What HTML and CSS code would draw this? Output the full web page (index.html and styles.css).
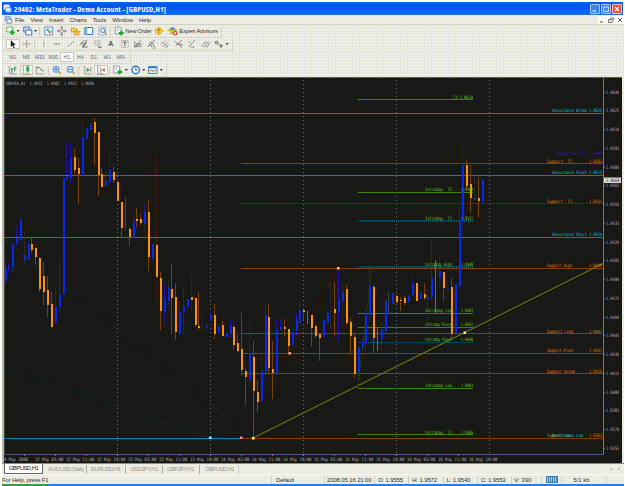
FILE: index.html
```html
<!DOCTYPE html>
<html lang="en">
<head>
<meta charset="utf-8">
<title>29402: MetaTrader - Demo Account - [GBPUSD,H1]</title>
<link rel="stylesheet" href="styles.css">
</head>
<body>
<svg class="defs" width="0" height="0">
  <symbol id="i-newchart" viewBox="0 0 10 10"><path d="M1 1h6v5H1z" fill="#fff" stroke="#4a9a4a" stroke-width=".8"/><path d="M6.5 4v5M4 6.5h5" stroke="#1faa2c" stroke-width="2"/></symbol>
  <symbol id="i-profiles" viewBox="0 0 10 10"><path d="M1 1h6v5H1z" fill="#cfe2f8" stroke="#3c76c8"/><path d="M3 4h6v5H3z" fill="#f4f8ff" stroke="#3c76c8"/></symbol>
  <symbol id="i-market" viewBox="0 0 10 10"><path d="M1 1h8v8H1z" fill="#eef6ff" stroke="#5b95cf"/><path d="M2.500 4.500l1.500-2 1.500 2z" fill="#28a745" stroke="#28a745" stroke-width=".5"/><path d="M4.500 5.500l1.500 2 1.500-2z" fill="#e04418" stroke="#e04418" stroke-width=".5"/></symbol>
  <symbol id="i-nav" viewBox="0 0 10 10"><path d="M5 .5v9M.5 5h9M3.7 2L5 .7 6.300 2M3.700 8L5 9.300 6.300 8M2 3.700L.7 5 2 6.300M8 3.700L9.300 5 8 6.300" fill="none" stroke="#777" stroke-width=".9"/><circle cx="5" cy="5" r="1.700" fill="#f2f2ea" stroke="#777" stroke-width=".7"/></symbol>
  <symbol id="i-folders" viewBox="0 0 10 10"><path d="M.5 2h3l1 1h2v3h-6z" fill="#ffd24a" stroke="#c28a12" stroke-width=".7"/><path d="M6 3.500l1 2h2.500l-2 1.500.8 2.500L6 8 3.700 9.500 4.500 7l-2-1.500H5z" fill="#ffc020" stroke="#b87c10" stroke-width=".5"/></symbol>
  <symbol id="i-terminal" viewBox="0 0 10 10"><path d="M1 1.500h8v7H1z" fill="#fff" stroke="#3478c4"/><path d="M1 1.500h2.500v7H1z" fill="#79b0e8"/></symbol>
  <symbol id="i-tester" viewBox="0 0 10 10"><path d="M1 1h7v8H1z" fill="#e2edf7" stroke="#8ba9c4" stroke-width=".8"/><circle cx="5" cy="4.500" r="2" fill="#fff" stroke="#5580aa"/><path d="M6.500 6L9 8.700" stroke="#927034"/></symbol>
  <symbol id="i-order" viewBox="0 0 10 10"><path d="M1 1h5l1 1v6H1z" fill="#fff" stroke="#6f8498" stroke-width=".8"/><path d="M2.500 3h3M2.500 4.500h2" stroke="#8b8b8b" stroke-width=".6"/><path d="M7 4.500v5M4.500 7h5" stroke="#18a826" stroke-width="1.800"/></symbol>
  <symbol id="i-meta" viewBox="0 0 10 10"><path d="M5 .8L9.200 5 5 9.200.8 5z" fill="#ffd64d" stroke="#c7961c" stroke-width=".9"/><path d="M5 2.800v4.400M3.500 4.500L5 3l1.500 1.500" stroke="#8a5e08" fill="none" stroke-width=".8"/></symbol>
  <symbol id="i-expert" viewBox="0 0 10 10"><path d="M1 4q4-6 7 0z" fill="#4d94dd"/><path d="M0 4.500h9" stroke="#e4b020" stroke-width="1.300"/><circle cx="4" cy="6.500" r="2" fill="#e2b06c"/><circle cx="7.500" cy="7.300" r="2.300" fill="#e5361c"/><path d="M6.500 6.300h2v2h-2z" fill="#fff"/></symbol>
  <symbol id="i-cursor" viewBox="0 0 10 10"><path d="M3 1v7l1.700-1.500L6 9.200l1-.5L5.800 6H8z" fill="#222"/></symbol>
  <symbol id="i-cross" viewBox="0 0 10 10"><path d="M5 1v8M1 5h8" stroke="#8a8a84" stroke-width=".8"/></symbol>
  <symbol id="i-v" viewBox="0 0 10 10"><path d="M5 1.500v7" stroke="#999" stroke-width=".8"/></symbol>
  <symbol id="i-h" viewBox="0 0 10 10"><path d="M2 5h6" stroke="#777" stroke-width=".8"/></symbol>
  <symbol id="i-t" viewBox="0 0 10 10"><path d="M2 8l6-6" stroke="#777" stroke-width=".8"/></symbol>
  <symbol id="i-chan" viewBox="0 0 10 10"><path d="M1 6l5-5M3 8l5-5M2 4l5 2M5 8h4M8 1L4 9" stroke="#555" stroke-width=".8"/></symbol>
  <symbol id="i-fibo" viewBox="0 0 10 10"><path d="M1 2h7M1 4h7M2 6h7" stroke="#888" stroke-width=".8" stroke-dasharray="1 .5"/><path d="M6 6.500v2h3" stroke="#555" fill="none" stroke-width=".8"/></symbol>
  <symbol id="i-label" viewBox="0 0 10 10"><path d="M1.500 1.500h7v7h-7z" stroke="#777" fill="none" stroke-width=".7" stroke-dasharray="1 1"/><path d="M3 3h4M5 3v4.500" stroke="#555" stroke-width=".9"/></symbol>
  <symbol id="i-fan" viewBox="0 0 10 10"><path d="M2 8l6-7M2 8l7-4M2 8l7-1M2 2v6M3 5h5" stroke="#666" stroke-width=".7"/></symbol>
  <symbol id="i-arc" viewBox="0 0 10 10"><path d="M1 8l7-7M3 3q4 0 4 5M2 5q3 0 3 3M6 9h3" stroke="#666" fill="none" stroke-width=".8"/></symbol>
  <symbol id="i-fork" viewBox="0 0 10 10"><path d="M1 6l5-5M3 8l6-6M2 3l6 5M6 9l3-4" stroke="#777" stroke-width=".8" stroke-dasharray="1.500 .5"/></symbol>
  <symbol id="i-gann" viewBox="0 0 10 10"><path d="M1 2l3 3 4-4M2 6l3-1 3 4M5 5l4 1" stroke="#666" fill="none" stroke-width=".8"/></symbol>
  <symbol id="i-line2" viewBox="0 0 10 10"><path d="M2 8l6-7M4 8h4M2 3h2" stroke="#777" stroke-width=".8"/></symbol>
  <symbol id="i-par" viewBox="0 0 10 10"><path d="M1 8l4-6M3.500 8.500l4-6M6 8.500l3-5" stroke="#777" stroke-width=".8"/></symbol>
  <symbol id="i-arrows" viewBox="0 0 10 10"><path d="M1 3.500l2-1.500 1.500 2-1.500 1zM5 6h3v2H6" stroke="#444" fill="none" stroke-width=".9"/></symbol>
  <symbol id="i-bars" viewBox="0 0 10 10"><path d="M1.500 1v8H9" stroke="#888" fill="none" stroke-width=".8"/><path d="M4 3v5M4 4h1.500M7 1.500v5M7 3h1.500" stroke="#258a38"/></symbol>
  <symbol id="i-candle" viewBox="0 0 10 10"><path d="M1.500 1v8H9" stroke="#888" fill="none" stroke-width=".8"/><path d="M6 0v8" stroke="#258a38" stroke-width=".7"/><path d="M4.500 1.500h3v5h-3z" fill="#25b53c"/></symbol>
  <symbol id="i-linec" viewBox="0 0 10 10"><path d="M1.500 1v8H9" stroke="#888" fill="none" stroke-width=".8"/><path d="M2 3q2-2 4 1t3 2" stroke="#258a38" fill="none"/></symbol>
  <symbol id="i-zin" viewBox="0 0 10 10"><path d="M6.500 6.500L9 9" stroke="#d19b28" stroke-width="1.700"/><circle cx="4.300" cy="4.300" r="3" fill="#d9ecff" stroke="#3b82d0"/><path d="M2.700 4.300h3.200M4.300 2.700v3.200" stroke="#2266bb" stroke-width=".9"/></symbol>
  <symbol id="i-zout" viewBox="0 0 10 10"><path d="M6.500 6.500L9 9" stroke="#d19b28" stroke-width="1.700"/><circle cx="4.300" cy="4.300" r="3" fill="#d9ecff" stroke="#3b82d0"/><path d="M2.700 4.300h3.200" stroke="#2266bb" stroke-width=".9"/></symbol>
  <symbol id="i-scroll" viewBox="0 0 10 10"><path d="M2 1v8h7" stroke="#888" fill="none" stroke-width=".8"/><path d="M4 3v4l3-2z" fill="#24a03a"/><path d="M8 2v5" stroke="#777" stroke-width=".7"/></symbol>
  <symbol id="i-shift" viewBox="0 0 10 10"><path d="M2 1v8h7M5 2v6" stroke="#777" fill="none" stroke-width=".8"/><path d="M9 3v4L6 5z" fill="#d05828"/></symbol>
  <symbol id="i-clock" viewBox="0 0 10 10"><circle cx="5" cy="5" r="3.700" fill="#fff" stroke="#2673ce" stroke-width="1.400"/><path d="M5 2.700V5h1.800" fill="none" stroke="#333" stroke-width=".8"/></symbol>
  <symbol id="i-tpl" viewBox="0 0 10 10"><path d="M.8 1.500h8.400v7H.8z" fill="#e3f0ff" stroke="#4b86c6"/><path d="M1 2.500h8" stroke="#3c78c0" stroke-width="1.500"/><path d="M2 6l2-1 1 1.500L8 5" stroke="#c04a2a" fill="none" stroke-width=".8"/></symbol>
  <symbol id="i-app" viewBox="0 0 10 10"><path d="M1 1h6v5H1z" fill="#fff" stroke="#b9d4ff"/><path d="M3 4h6v5H3z" fill="#d9e9ff" stroke="#5c98e8"/></symbol>
</svg>

<div class="window">
  <header class="titlebar">
    <svg class="icon"><use href="#i-app"/></svg>
    <h1>29402: MetaTrader - Demo Account - [GBPUSD,H1]</h1>
    <div class="winbtns">
      <svg viewBox="0 0 10 10"><path d="M2 7.500h4" stroke="#fff" stroke-width="1.500"/></svg>
      <svg viewBox="0 0 10 10"><path d="M2 2.500h6v5.500H2z" fill="none" stroke="#fff"/></svg>
      <svg class="close" viewBox="0 0 10 10"><path d="M2.500 2.500l5 5M7.500 2.500l-5 5" stroke="#fff" stroke-width="1.400"/></svg>
    </div>
  </header>

  <nav class="menubar">
    <svg class="icon"><use href="#i-profiles"/></svg>
    <span>File</span><span>View</span><span>Insert</span><span>Charts</span><span>Tools</span><span>Window</span><span>Help</span>
    <div class="mdibtns">
      <svg viewBox="0 0 6 6"><path d="M1 5h3" stroke="#555"/></svg>
      <svg viewBox="0 0 6 6"><path d="M2 1h3.500v2.500M.5 2.500h3.500v3H.5z" fill="none" stroke="#555" stroke-width=".8"/></svg>
      <svg viewBox="0 0 6 6"><path d="M1 1l4 4M5 1L1 5" stroke="#555"/></svg>
    </div>
  </nav>

  <div class="toolbars">
    <div class="bar main">
      <svg class="cell slim"><use href="#i-newchart"/></svg><i class="drop"></i>
      <svg class="cell"><use href="#i-profiles"/></svg><i class="drop"></i><i class="sep"></i>
      <svg class="cell"><use href="#i-market"/></svg><svg class="cell"><use href="#i-nav"/></svg><svg class="cell"><use href="#i-folders"/></svg><svg class="cell"><use href="#i-terminal"/></svg><svg class="cell"><use href="#i-tester"/></svg><i class="sep"></i>
      <svg class="cell order-icon"><use href="#i-order"/></svg><span class="order">New Order</span>
      <svg class="cell"><use href="#i-meta"/></svg>
      <svg class="cell"><use href="#i-expert"/></svg><span class="expert">Expert Advisors</span>
    </div>
    <div class="bar">
      <svg class="cell on"><use href="#i-cursor"/></svg><svg class="cell"><use href="#i-cross"/></svg><i class="sep"></i>
      <svg class="cell"><use href="#i-v"/></svg><svg class="cell"><use href="#i-h"/></svg><svg class="cell"><use href="#i-t"/></svg><svg class="cell"><use href="#i-chan"/></svg><svg class="cell"><use href="#i-fibo"/></svg><b class="cell">A</b><svg class="cell"><use href="#i-label"/></svg><svg class="cell"><use href="#i-fan"/></svg><svg class="cell"><use href="#i-arc"/></svg><svg class="cell"><use href="#i-fork"/></svg><svg class="cell"><use href="#i-gann"/></svg><svg class="cell"><use href="#i-line2"/></svg><svg class="cell"><use href="#i-par"/></svg><svg class="cell"><use href="#i-arrows"/></svg><i class="drop"></i>
    </div>
    <div class="bar periods">
      <span class="cell">M1</span><span class="cell">M5</span><span class="cell">M15</span><span class="cell">M30</span><span class="cell on">H1</span><span class="cell">H4</span><span class="cell">D1</span><span class="cell">W1</span><span class="cell">MN</span>
    </div>
    <div class="bar">
      <svg class="cell"><use href="#i-bars"/></svg><svg class="cell on"><use href="#i-candle"/></svg><svg class="cell"><use href="#i-linec"/></svg><i class="sep"></i>
      <svg class="cell"><use href="#i-zin"/></svg><svg class="cell"><use href="#i-zout"/></svg><i class="sep"></i>
      <svg class="cell"><use href="#i-scroll"/></svg><svg class="cell on"><use href="#i-shift"/></svg><i class="sep"></i>
      <svg class="cell"><use href="#i-order"/></svg><i class="drop"></i><svg class="cell"><use href="#i-clock"/></svg><i class="drop"></i><svg class="cell"><use href="#i-tpl"/></svg><i class="drop"></i>
    </div>
  </div>

  <main class="chart">
    <svg id="plot" viewBox="4 77 618 386" width="618" height="386"></svg>
  </main>

  <div class="tabs">
    <span class="active">GBPUSD,H1</span><span class="t2">AUDUSD,Daily</span><span class="t3">EURUSD,H1</span><span class="t4">USDJPY,H1</span><span class="t5">GBPJPY,H1</span><span class="t6">GBPUSD,H1</span>
    <div class="scroll"><i></i><i></i></div>
  </div>

  <footer class="status">
    <span class="help">For Help, press F1</span><span class="profile">Default</span><span class="date">2008.05.16 21:00</span><span class="val">O: 1.9555</span><span class="val">H: 1.9572</span><span class="val">L: 1.9540</span><span class="val">C: 1.9553</span><span class="vol">V: 390</span>
    <span class="conn"><svg viewBox="0 0 12 7" width="12" height="7"><path d="M0 0h12v7H0z" fill="#3d7fae"/><path d="M1.500 1v5M3.500 1v5M5.500 1v5M7.500 1v5" stroke="#b8d94e"/><path d="M9.500 1v5" stroke="#efe08a"/></svg></span>
    <span class="kb">5/1 kb</span>
  </footer>
  <div class="taskbar"><i></i></div>
</div>
<script src="chart.js"></script>
</body>
</html>
```
FILE: styles.css
```css
* { box-sizing: border-box; }

body {
  margin: 0;
  background: #fff;
  font-family: "Liberation Sans", Arial, sans-serif;
  font-size: 6.3px;
  color: #333;
}

.defs { display: block; position: absolute; }

.window {
  width: 625px;
  height: 486px;
  padding: 2px 0 0 2px;
  display: flex;
  flex-direction: column;
  overflow: hidden;
}

.titlebar {
  height: 13px;
  flex: none;
  margin-right: 2px;
  display: flex;
  align-items: center;
  padding-left: 1px;
  background: linear-gradient(#0b66f6 0, #0455e2 20%, #0558e8 50%, #0068ff 70%, #0068ff 90%, #3c6ccc 100%);
  color: #fff;
}

.icon { width: 9px; height: 9px; flex: none; }

.titlebar h1 {
  margin: 0 0 0 2px;
  font-family: "Open Sans", sans-serif;
  font-size: 7.5px;
  font-weight: bold;
  font-stretch: condensed;
  letter-spacing: 0.16px;
  white-space: nowrap;
}

.winbtns { margin-left: auto; display: flex; gap: 1px; padding-right: 1px; }

.winbtns svg {
  width: 10px;
  height: 10px;
  border: 1px solid #a9c8f8;
  border-radius: 1px;
  background: #3c80e8;
}

.winbtns .close { background: #e2572f; border-color: #f3c4b2; }

.menubar {
  height: 10px;
  flex: none;
  margin-right: 1px;
  display: flex;
  align-items: center;
  padding-left: 2px;
  background: #edece3;
  border-bottom: 1px solid #d5d3c2;
  font-size: 6px;
  letter-spacing: -0.1px;
}

.menubar .icon { margin-right: 2px; height: 8px; }
.menubar span { margin-right: 6.1px; }

.mdibtns {
  margin-left: auto;
  display: flex;
  gap: 3px;
  padding: 1px 1px 1px 2px;
  background: #f8f8f4;
}

.mdibtns svg { width: 6px; height: 6px; }

.toolbars {
  height: 52px;
  flex: none;
  margin-right: 1px;
  display: flex;
  flex-direction: column;
  background-color: #e9e8e0;
  background-image: radial-gradient(#fff 0.5px, transparent 0.8px), radial-gradient(#ffffb0 0.4px, transparent 0.7px);
  background-size: 3px 3px, 9px 7px;
}

.bar {
  height: 13.1px;
  align-self: flex-start;
  display: flex;
  align-items: center;
  padding: 0 2px 0 3px;
  border-left: 1px solid #dad8cb;
  border-right: 1px solid #d3d1c3;
  border-bottom: 1px solid #d9d7c9;
}

.main { padding-left: 2px; padding-right: 3px; }

.cell {
  width: 13.5px;
  height: 10px;
  padding: 0 1px;
  flex: none;
  text-align: center;
  line-height: 10px;
}

.slim { width: 11.5px; padding: 0; }
.order-icon { width: 12.5px; padding: 0 1px; }

b.cell { font-size: 7px; color: #555; }

.on { background: #fbfbf9; box-shadow: inset 0 0 0 1px #c9c7bb; }

.drop {
  width: 3px;
  height: 2px;
  flex: none;
  margin-right: 1px;
  background: #333;
  clip-path: polygon(0 0, 100% 0, 50% 100%);
}

.sep { width: 1px; height: 9px; flex: none; margin: 0 1.3px; background: #d0cebf; }
.order { width: 27px; white-space: nowrap; font-size: 5.9px; letter-spacing: -0.25px; }
.expert { width: 39px; white-space: nowrap; font-size: 5.9px; letter-spacing: -0.15px; }
.periods { font-size: 5px; color: #666; }
.periods .cell { padding: 0; }

.chart {
  flex: none;
  height: 386px;
  margin-right: 1px;
  padding-left: 2px;
  background: linear-gradient(90deg, #b7b5a6 0 2px, #edece3 2px);
}

.chart svg { display: block; background: #181816; }

.tabs {
  height: 11px;
  flex: none;
  display: flex;
  align-items: center;
  padding-left: 2px;
  margin-right: 1px;
  background: #edece3;
  border-top: 1px solid #8b8a82;
  color: #999788;
  font-size: 5.9px;
}

.tabs span { white-space: nowrap; letter-spacing: -0.15px; line-height: 9px; }
.tabs .active { width: 39px; text-align: center; background: #fff; color: #222; border: 1px solid #666; border-top: 0; letter-spacing: -0.5px; }
.tabs .t2 { width: 44px; padding-left: 5px; border-right: 1px solid #aaa; letter-spacing: -0.3px; }
.tabs .t3 { width: 39px; padding-left: 4px; border-right: 1px solid #aaa; letter-spacing: -0.5px; }
.tabs .t4 { width: 37px; padding-left: 4px; border-right: 1px solid #aaa; letter-spacing: -0.4px; }
.tabs .t5 { width: 37px; padding-left: 4px; border-right: 1px solid #aaa; letter-spacing: -0.5px; }
.tabs .t6 { width: 39px; padding-left: 5px; border-right: 1px solid #ccc; letter-spacing: -0.55px; }

.scroll { margin-left: auto; display: flex; gap: 6px; padding-right: 4px; }
.scroll i { width: 2px; height: 3px; background: #aaa; clip-path: polygon(0 50%, 100% 0, 100% 100%); }
.scroll i + i { transform: scaleX(-1); }

.status {
  height: 10px;
  flex: none;
  margin-right: 1px;
  display: flex;
  align-items: center;
  background: #edece3;
  border-top: 1px solid #f8f8f4;
  font-size: 6px;
  white-space: nowrap;
}

.status span { border-right: 1px solid #d3d1c3; line-height: 8px; }
.help { width: 270px; letter-spacing: -0.18px; }
.profile { width: 53px; padding-left: 4px; letter-spacing: -0.15px; }
.date { width: 50px; padding-left: 2px; letter-spacing: -0.14px; }
.val { width: 34.300px; padding-left: 3px; letter-spacing: -0.15px; }
.vol { width: 30px; padding-left: 2px; }
.conn { width: 20px; padding-left: 4px; display: flex; }
.kb { width: 45px; padding-left: 11px; }

.taskbar { height: 2px; flex: none; margin-right: 1px; background: #2f7be4; }
.taskbar i { display: block; width: 45px; height: 2px; background: #3e9a3e; }

#plot { font-family: "DejaVu Sans Mono", monospace; font-size: 4.6px; }
#plot text { white-space: pre; }
.axis { fill: #b0b0be; }
.now { fill: #222; }
.line { fill: none; stroke-width: 1; shape-rendering: crispEdges; }
.grid { stroke: #66667c; stroke-dasharray: 1 3; }
.cyan { stroke: #0086a6; }
.orange { stroke: #7f4200; }
.green { stroke: #3d8507; }
.teal { stroke: #17566a; stroke-width: 1.5; stroke-dasharray: 1 1; }
.dashed { stroke: #6d2614; stroke-dasharray: 2 1; }
.frame { stroke: #77777c; }
.base { stroke: #55558a; }
.wb { stroke: #3520c0; stroke-dasharray: 1 1; }
.wo { stroke: #784007; }
.wr { stroke: #642514; stroke-dasharray: 1 1; }
.wy { stroke: #77770c; }
.wg { stroke: #444440; }
.b { fill: #0828ee; shape-rendering: crispEdges; }
.o { fill: #ff9208; shape-rendering: crispEdges; }
.tc { fill: #08cce0; }
.to { fill: #e8780c; }
.tg { fill: #60d41c; }
.tp { fill: #3c24b4; }
```
FILE: chart.js
```js
const plot = document.getElementById("plot");
const NS = "http://www.w3.org/2000/svg";

function add(tag, attrs, text) {
  const el = document.createElementNS(NS, tag);
  for (const k in attrs) el.setAttribute(k, attrs[k]);
  if (text) el.textContent = text;
  plot.appendChild(el);
}
function line(x1, y1, x2, y2, cls) {
  add("line", { x1, y1, x2, y2, class: "line " + cls });
}
function label(x, y, w, text, cls) {
  add("text", { x, y, textLength: w, lengthAdjust: "spacingAndGlyphs", class: cls }, text);
}

// frame and time grid
line(4, 77.5, 622, 77.5, "base");
[117.5, 210.5, 303.5, 396.5, 489.5].forEach(x => line(x, 80, x, 454, "grid"));
line(603.5, 78, 603.5, 455, "frame");
line(4, 454.5, 604, 454.5, "base");
line(4.5, 78, 4.5, 455, "wg");

// horizontal levels
[113.5, 175.5, 237.5].forEach(y => line(4, y, 603, y, "cyan"));
[163.5, 268.5, 333.5, 353.5, 373.5, 438.5].forEach(y => line(241, y, 603, y, "orange"));
line(4, 438.5, 242, 438.5, "cyan");
line(241, 203.5, 603, 203.5, "dashed");
[99.5, 192.5, 313.5, 327.5, 388.5, 434.5].forEach(y => line(358, y, 473, y, "green"));
[221, 267, 342.5].forEach(y => line(358, y, 473, y, "teal"));

// trend lines
add("path", { d: "M4 239L253 438M4 368L210 438", stroke: "#0c5360", "stroke-dasharray": "1 3", fill: "none" });
add("path", { d: "M241 438L338 268", stroke: "#6e0a0a", "stroke-dasharray": "2 2", fill: "none" });
add("path", { d: "M358 388L372 267", stroke: "#2f6d18", "stroke-dasharray": "1 2", fill: "none" });
add("path", { d: "M253 438L603 263.500", stroke: "#85850c", fill: "none" });

// x, high, low, body top, body bottom, type
const candles = [
  [5,262,283,269,281,"b"],[8.5,262,274,267,269,"b"],[12.5,243,272,245,268,"b"],[16.5,228,245,238,242,"b"],
  [20,219,240,219,240,"b"],[24,233,265,255,260,"b"],[28,243,259,243,259,"b"],[31.5,238,253,244,250,"o"],
  [35.5,247,265,248,257,"o"],[39.5,257,292,258,289,"o"],[43.5,262,305,276,292,"o"],[47.5,276,317,290,305,"o"],
  [51.5,291,328,304,327,"o"],[55.5,288,324,306,322,"b"],[59,262,311,294,307,"b"],
  [63,178,294,178,294,"b"],[66.5,140,180,177,180,"b"],[70.5,144,183,158,178,"b"],[74.5,149,176,157,170,"o"],
  [78.5,158,204,168,174,"o"],[82,123,176,137,176,"b"],[86,128,139,128,139,"b"],[90,123,130,123,130,"b"],
  [94,118,165,122,133,"o"],[98,132,196,132,175,"o"],[101.5,168,187,174,187,"o"],[105.5,172,186,181,186,"b"],
  [109.5,155,182,170,182,"b"],[113.5,167,183,172,180,"o"],[117.5,182,201,182,201,"o"],[121,202,238,202,228,"o"],
  [125,197,230,0,0,"g"],[129,227,246,229,237,"o"],[133,217,238,221,238,"b"],[136.5,208,227,219,221,"o"],
  [140.5,214,225,219,223,"o"],[144.5,205,232,211,224,"b"],[148,200,271,212,257,"o"],[152,244,259,244,259,"b"],
  [156,156,301,245,277,"r"],[160,272,330,278,311,"o"],[164,284,323,299,312,"b"],[168,281,308,288,301,"b"],
  [171.5,264,334,289,298,"o"],[175.5,283,340,297,332,"o"],[179,302,334,312,334,"b"],[183,288,338,306,313,"b"],
  [187,299,307,299,307,"b"],[191,275,310,297,300,"r"],[195,298,327,298,325,"o"],[198.5,292,330,326,328,"o"],
  [202.5,319,332,325,326,"b"],[206.5,323,333,326,328,"b"],[210.5,312,321,314,321,"b"],[214.5,304,339,315,334,"o"],
  [218,326,333,326,333,"b"],[222,321,336,325,336,"o"],[226,333,337,333,337,"b"],[230,320,337,326,334,"b"],
  [233.5,325,350,327,345,"o"],[237.5,334,352,343,351,"o"],[241.5,313,376,349,370,"o"],[245.5,367,405,371,377,"o"],
  [249,323,386,354,380,"b"],[253,341,438,357,391,"o"],[257,380,413,392,402,"o"],[261,353,401,371,401,"b"],
  [265,302,376,315,371,"b"],[268.5,304,375,317,368,"o"],[272.5,341,399,369,373,"o"],[276,320,373,330,373,"b"],
  [280.5,318,330,326,330,"b"],[284,319,336,327,329,"o"],[288,329,355,329,346,"o"],[292,332,345,332,345,"b"],
  [296,314,336,319,331,"b"],[299.5,302,324,310,323,"b"],[303.5,308,320,310,312,"o"],[307.5,311,324,0,0,"y"],
  [311,315,346,315,328,"o"],[315,325,338,326,336,"o"],[319,333,361,334,338,"o"],[323,320,337,320,337,"b"],
  [327,310,322,312,322,"b"],[330.5,283,329,311,312,"b"],[334.5,282,336,309,313,"o"],[338.5,268,342,300,312,"b"],
  [342,283,326,292,301,"b"],[346,285,325,289,323,"o"],[350,318,355,322,336,"o"],[354,334,378,337,374,"o"],
  [358,347,388,347,372,"b"],[362,337,352,342,348,"b"],[365.5,307,352,314,343,"b"],[369.5,267,322,285,315,"b"],
  [373.5,285,354,287,338,"o"],[377.5,327,351,0,0,"y"],[381,323,350,329,339,"b"],[385,300,331,301,331,"b"],
  [388.5,292,314,0,0,"g"],[392.5,293,304,293,304,"b"],[396.5,294,304,296,302,"o"],[400.5,297,311,300,301,"o"],
  [404.5,296,305,298,303,"o"],[408,295,302,296,302,"b"],[412.5,277,297,284,295,"b"],[416,283,301,283,301,"o"],
  [420,293,299,293,299,"b"],[424,283,300,294,298,"o"],[427.5,289,323,297,299,"b"],[431.5,239,300,278,297,"b"],
  [435.5,260,313,0,0,"y"],[439.5,257,287,271,278,"b"],[443,272,301,272,288,"o"],[447,284,291,288,289,"b"],
  [451,278,340,287,334,"o"],[455,284,333,284,333,"b"],[459,205,286,221,286,"b"],[462.5,145,234,165,221,"b"],
  [466.5,159,188,165,186,"o"],[470.5,165,213,184,198,"o"],[474.5,177,200,197,200,"b"],[478.5,177,217,198,201,"o"],
  [482,180,202,180,202,"b"]
];
candles.forEach(([x, hi, lo, top, bot, t]) => {
  const cx = Math.floor(x) + 0.5;
  line(cx, hi, cx, lo, "w" + t);
  if (bot) add("rect", { x: cx - 1 + (x % 1 ? 0.5 : 0), y: top, width: 2, height: bot - top, class: t === "b" ? "b" : "o" });
});

// anchor points
[[210,437.5,"#5ff"],[241,437.5,"#f88"],[253,438,"#ff6"],[338,268,"#fba"],[289.5,353,"#f99"],[464.5,332.5,"#ff9"]]
  .forEach(([x, y, fill]) => add("rect", { x: x - 1, y: y - 1, width: 2.5, height: 2.5, fill }));

// level captions
label(453, 99, 20, "T3 1.9634", "tg");
[["Intraday  T2","1.9560",191],["Intraday  T1","1.9537",220],["Intraday High","1.9500",266],["Intraday Low","1.9463",312],
 ["Intraday Pivot","1.9451",326],["Intraday Short","1.9440",341],["Intraday Low","1.9403",387],["Intraday  T1","1.9366",433.5]]
  .forEach(([n, v, y]) => { label(425, y, 27, n, "tg"); label(461, y, 12, v, "tg"); });
[["Resistance Break 1.9622",112],["Resistance Pivot 1.9573",174],["Resistance Short 1.9524",236]]
  .forEach(([n, y]) => label(552.5, y, 49.5, n, "tc"));
label(557, 155, 45, "Resistance T1 1.9591", "tp");
[["Support  T2","1.9583",162.5,25],["Support  T1","1.9551",203,25],["Support High","1.9499",267,25],["Support Long","1.9447",332.5,26],
 ["Support Pivot","1.9431",352,27],["Support Break","1.9415",372.5,28],["Support Low","1.9363",437,24]]
  .forEach(([n, v, y, w]) => { label(547, y, w, n, "to"); label(589, y, 13, v, "to"); });
label(552, 437, 31, "Resistance Low", "tc");
label(6, 84.5, 88, "GBPUSD,H1  1.9552  1.9582  1.9552  1.9569", "axis");

// price scale
for (let i = 0; i < 20; i++) {
  const y = 91.5 + i * 18.76;
  line(603, Math.round(y) + 0.5, 605, Math.round(y) + 0.5, "frame");
  label(606, y + 2, 13, (1.964 - i * 0.0015).toFixed(4), "axis");
}
add("rect", { x: 604, y: 177.5, width: 17, height: 5.5, fill: "#d8d8d8" });
label(606, 182, 13.5, "1.9569", "now");

// time scale
const hours = ["03:00", "11:00", "19:00"];
label(4, 461, 24, "9 May 2008", "axis");
for (let i = 0; i < 15; i++) {
  const x = 35 + i * 31;
  line(x - 10.5, 454, x - 10.5, 456, "frame");
  label(x, 461, 28.5, (12 + Math.floor(i / 3)) + " May " + hours[i % 3], "axis");
}
```
